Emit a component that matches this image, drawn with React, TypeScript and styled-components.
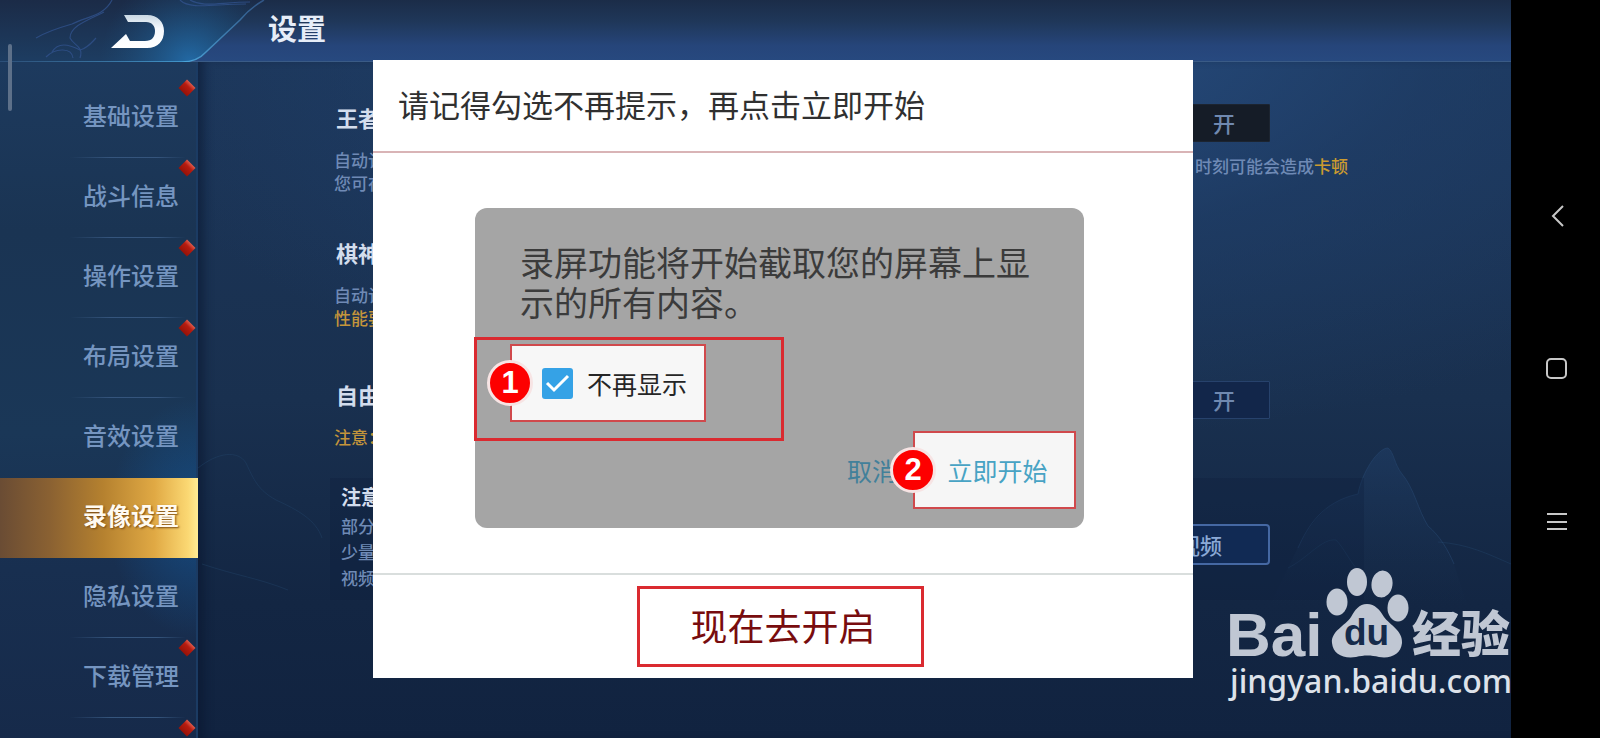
import React from "react";
import styled, { createGlobalStyle } from "styled-components";

const GlobalStyle = createGlobalStyle`
  * { box-sizing: border-box; }
  html, body, #root { min-height: 100%; }
  body {
    margin: 0;
    background: #000;
    font-family: "Noto Sans", "Noto Sans CJK SC", sans-serif;
    overflow: hidden;
  }
  button { font: inherit; cursor: pointer; }
  h1, h2, p { margin: 0; }
`;

const Screen = styled.div`
  display: grid;
  grid-template-columns: 1fr 89px;
  height: 100vh;
`;

const Game = styled.div`
  position: relative;
  display: flex;
  flex-direction: column;
  overflow: hidden;
  background: #122542;
`;

const Header = styled.header`
  display: flex;
  height: 62px;
  flex: none;
  border-bottom: 1px solid #3a5b86;
  background: linear-gradient(#1b2c48 0%, #1f3759 35%, #26457a 75%, #27497f 100%);
`;

const BackButton = styled.button`
  width: 268px;
  height: 63px;
  padding: 0;
  border: 0;
  background: none;
  svg { display: block; }
`;

const PageTitle = styled.h1`
  font-size: 29px;
  line-height: 57px;
  font-weight: 700;
  color: #e6edf8;
`;

const Columns = styled.div`
  display: flex;
  flex: 1;
  min-height: 0;
`;

const Sidebar = styled.nav`
  width: 198px;
  flex: none;
  padding-top: 16px;
  border-right: 2px solid #1b3b63;
  background:
    radial-gradient(ellipse 90px 120px at 198px 456px, rgba(20, 92, 160, 0.6), transparent),
    linear-gradient(#1d3a5e 0%, #1a3453 25%, #1a3757 55%, #182f50 75%, #162a4a 100%);
`;

const NavItem = styled.a<{ $active?: boolean; $line?: boolean }>`
  position: relative;
  display: flex;
  justify-content: flex-end;
  height: 80px;
  padding-right: 19px;
  margin-right: -2px;
  font-size: 24px;
  line-height: 76px;
  font-weight: ${(p) => (p.$active ? 700 : 500)};
  text-decoration: none;
  color: ${(p) => (p.$active ? "#fffaf0" : "#7595c0")};
  text-shadow: ${(p) => (p.$active ? "1px 1px 2px #7a4a10" : "none")};
  background: ${(p) =>
    p.$active
      ? "linear-gradient(90deg, #6a4c34 0%, #8a6132 25%, #b5812f 52%, #e0a944 78%, #fbd873 95%, #ffec94 100%)"
      : p.$line
        ? "linear-gradient(90deg, transparent, #35557d 35%, #35557d 75%, transparent) 70px 100% / 116px 1px no-repeat"
        : "none"};
`;

const RedDot = styled.i`
  position: absolute;
  top: 4px;
  right: 5px;
  width: 12px;
  height: 12px;
  background: linear-gradient(180deg, #e05a4a, #b71c10 35%, #961208);
  transform: rotate(45deg);
`;

const Main = styled.main`
  position: relative;
  flex: 1;
  padding: 42px 147px 0 132px;
  box-shadow: inset 10px 0 10px -4px rgba(8, 20, 44, 0.5);
  background:
    radial-gradient(ellipse 900px 400px at 60% -20px, #274d80 0%, rgba(32, 64, 108, 0.6) 50%, transparent 100%),
    linear-gradient(#1c3659 0%, #19304f 50%, #132643 80%, #112340 100%);
`;

const Mountains = styled.svg`
  position: absolute;
  right: 0;
  bottom: 120px;
  width: 100%;
  height: 200px;
`;

const Section = styled.section<{ $height: number; $panel?: boolean }>`
  position: relative;
  display: flex;
  justify-content: space-between;
  height: ${(p) => p.$height}px;
  padding: ${(p) => (p.$panel ? "5px 16px 0 11px" : "0 16px 0 4px")};
  background: ${(p) => (p.$panel ? "rgba(14, 30, 60, 0.3)" : "none")};
`;

const SettingTitle = styled.h2<{ $tight?: boolean }>`
  margin-bottom: ${(p) => (p.$tight ? 2 : 16)}px;
  padding-left: ${(p) => (p.$tight ? 0 : 2)}px;
  font-size: ${(p) => (p.$tight ? 20 : 22)}px;
  line-height: 29px;
  color: #d3dded;
`;

const Note = styled.p<{ $gold?: boolean; $tall?: boolean }>`
  font-size: 17px;
  line-height: ${(p) => (p.$tall ? 26 : 23)}px;
  font-weight: 500;
  color: ${(p) => (p.$gold ? "#c4953b" : "#6f8ab5")};
`;

const Gold = styled.span`
  color: #cc9b30;
`;

const Controls = styled.div<{ $down?: boolean }>`
  display: flex;
  flex-direction: column;
  align-items: flex-end;
  gap: 13px;
  padding-top: ${(p) => (p.$down ? 41 : 0)}px;
`;

const GameButton = styled.button<{ $kind: "dark" | "blue" | "line" }>`
  width: ${(p) => (p.$kind === "line" ? 140 : 92)}px;
  height: ${(p) => (p.$kind === "line" ? 41 : 38)}px;
  margin-right: 78px;
  padding: 0;
  font-size: 22px;
  line-height: 30px;
  font-weight: 500;
  color: ${(p) => (p.$kind === "line" ? "#8ba9d6" : "#7089b0")};
  border: ${(p) =>
    p.$kind === "line" ? "2px solid #4568a3" : p.$kind === "blue" ? "1px solid #27426c" : "1px solid #1c2430"};
  border-radius: ${(p) => (p.$kind === "line" ? 4 : 1)}px;
  background: ${(p) => (p.$kind === "line" ? "#112a54" : p.$kind === "blue" ? "#12264a" : "#151c27")};
`;

const ScrollThumb = styled.div`
  position: absolute;
  left: 8px;
  top: 44px;
  width: 4px;
  height: 67px;
  border-radius: 2px;
  background: #5d7089;
`;

const Overlay = styled.div`
  position: absolute;
  inset: 60px 0 0 0;
  display: flex;
  justify-content: center;
  align-items: flex-start;
  padding-left: 55px;
`;

const Modal = styled.div`
  width: 820px;
  background: #fff;
`;

const ModalTitle = styled.h2`
  padding: 0 25px;
  font-size: 31px;
  line-height: 91px;
  font-weight: 400;
  color: #303030;
  border-bottom: 2px solid #d9b4b6;
`;

const ModalBody = styled.div`
  display: flex;
  justify-content: center;
  padding: 55px 7px 45px 0;
`;

const Prompt = styled.div`
  width: 609px;
  padding: 35px 0 19px;
  border-radius: 12px;
  background: #a5a5a5;
`;

const PromptText = styled.p`
  padding: 0 45px;
  margin-bottom: 14px;
  font-size: 34px;
  line-height: 40px;
  color: #3b3b3b;
`;

const Outline = styled.div`
  width: 310px;
  margin-left: -1px;
  padding: 4px 0 16px 33px;
  border: 3px solid #da2a30;
`;

const CheckLabel = styled.label`
  position: relative;
  display: flex;
  align-items: center;
  gap: 14px;
  width: 196px;
  height: 78px;
  padding-left: 30px;
  border: 2px solid #d0494c;
  background: #f7f7f7;
  font-size: 25px;
  color: #262626;
`;

const Check = styled.input`
  appearance: none;
  width: 31px;
  height: 31px;
  margin: 0;
  border-radius: 3px;
  background: #35a2e6;
`;

const CheckMark = styled.svg`
  position: absolute;
  left: 30px;
  top: 22px;
  pointer-events: none;
`;

const Step = styled.b`
  position: absolute;
  left: -25px;
  top: 14px;
  width: 46px;
  height: 46px;
  border: 3px solid #f7e4e4;
  border-radius: 50%;
  background: #fd0000;
  color: #fff;
  font-family: "Liberation Sans", sans-serif;
  font-size: 31px;
  line-height: 40px;
  text-align: center;
`;

const Actions = styled.div`
  display: flex;
  justify-content: flex-end;
  gap: 16px;
  margin-top: -10px;
  padding-right: 8px;
`;

const CancelButton = styled.button`
  padding: 0;
  border: 0;
  background: none;
  font-size: 25px;
  color: #42809a;
`;

const StartButton = styled.button`
  position: relative;
  width: 163px;
  height: 78px;
  padding: 0 0 0 6px;
  border: 2px solid #d0494c;
  background: #f6f6f6;
  font-size: 25px;
  color: #48a3c4;
`;

const ModalFooter = styled.div`
  display: flex;
  justify-content: center;
  padding: 11px 5px 11px 0;
  border-top: 2px solid #d9dedd;
`;

const ConfirmButton = styled.button`
  width: 287px;
  height: 81px;
  padding: 0 0 0 5px;
  border: 3px solid #da2a30;
  background: #fff;
  font-size: 37px;
  line-height: 40px;
  color: #780c0e;
`;

const Watermark = styled.div`
  position: absolute;
  right: 0;
  bottom: 34px;
  svg { display: block; }
`;

const SystemBar = styled.div`
  display: flex;
  flex-direction: column;
  align-items: center;
  justify-content: center;
  gap: 109px;
  padding-left: 2px;
  background: #000;
`;

const SystemButton = styled.button`
  width: 44px;
  height: 44px;
  padding: 0;
  border: 0;
  background: none;
  svg { display: block; }
`;

const items = [
  { name: "基础设置", dot: true },
  { name: "战斗信息", dot: true },
  { name: "操作设置", dot: true },
  { name: "布局设置", dot: true },
  { name: "音效设置", dot: false },
  { name: "录像设置", dot: false, active: true },
  { name: "隐私设置", dot: false },
  { name: "下载管理", dot: true },
];

const BackArt = () => (
  <svg width="268" height="63" viewBox="0 0 268 63" fill="none">
    <defs>
      <linearGradient id="tab" x1="0" y1="0" x2="0" y2="1">
        <stop offset="0" stopColor="#1b2b47" />
        <stop offset="1" stopColor="#1d3d62" />
      </linearGradient>
      <radialGradient id="glow" gradientUnits="userSpaceOnUse" cx="190" cy="62" r="90">
        <stop offset="0" stopColor="#2478bb" stopOpacity="0.75" />
        <stop offset="1" stopColor="#1d5584" stopOpacity="0" />
      </radialGradient>
      <linearGradient id="edge" gradientUnits="userSpaceOnUse" x1="0" y1="0" x2="264" y2="0">
        <stop offset="0" stopColor="#31557f" />
        <stop offset="0.7" stopColor="#4ba5da" />
        <stop offset="1" stopColor="#305383" />
      </linearGradient>
      <linearGradient id="arrow" x1="0" y1="0" x2="0" y2="1">
        <stop offset="0" stopColor="#c9d8e4" />
        <stop offset="0.4" stopColor="#f4f8fd" />
        <stop offset="1" stopColor="#ffffff" />
      </linearGradient>
    </defs>
    <path d="M0 0H264Q250 8 240 20L206 52Q197 62 182 62H0Z" fill="url(#tab)" />
    <path d="M0 0H264Q250 8 240 20L206 52Q197 62 182 62H0Z" fill="url(#glow)" />
    <path d="M264 0Q250 8 240 20L206 52Q197 62 182 62H0" stroke="url(#edge)" strokeWidth="1.5" />
    <g stroke="#31528c" strokeWidth="1.2" opacity="0.8">
      <path d="M112 0C104 16 88 16 72 24C58 28 46 32 36 38" />
      <path d="M104 12C88 20 70 26 70 38C74 46 84 46 80 58" />
      <path d="M52 52C58 42 68 44 80 50C88 48 92 42 96 38" />
      <path d="M46 57C56 47 72 48 73 58" />
      <path d="M180 0C190 10 214 4 246 4" />
      <path d="M190 0C204 8 220 2 250 2" />
    </g>
    <path
      d="M124 15H147C158 15 164 22 164 31C164 41 158 48 147 48H111L126 34L130 41H145C152 41 155 37 155 31C155 26 152 22 146 22H128Z"
      fill="url(#arrow)"
    />
  </svg>
);

const BaiduMark = () => (
  <svg width="284" height="136" viewBox="0 0 284 136" fill="#c0c7d3" role="img" aria-label="Baidu 经验 jingyan.baidu.com">
    <text x="-1" y="88" fontFamily="Liberation Sans, sans-serif" fontWeight="700" fontSize="62">Bai</text>
    <ellipse cx="110" cy="34" rx="10.500" ry="13.500" />
    <ellipse cx="130" cy="14" rx="10" ry="14" />
    <ellipse cx="155" cy="16" rx="10.500" ry="13.500" transform="rotate(8 155 16)" />
    <ellipse cx="171" cy="40" rx="10.500" ry="13.500" />
    <path d="M140 36C148 36 153 42 157 49C163 57 176 63 175 75C174 86 164 91 152 89C144 87 137 87 129 89C116 91 106 86 105 75C104 63 118 58 124 49C128 42 132 36 140 36Z" />
    <text x="117" y="77" fill="#162b4b" fontFamily="Liberation Sans, sans-serif" fontWeight="700" fontSize="37">du</text>
    <text x="185" y="84" fontFamily="Noto Sans CJK SC, sans-serif" fontWeight="900" fontSize="49">经验</text>
    <text x="3" y="125" fill="#dde2ea" fontFamily="Noto Sans, sans-serif" fontWeight="500" fontSize="32">jingyan.baidu.com</text>
  </svg>
);

export default function App() {
  return (
    <>
      <GlobalStyle />
      <Screen>
        <Game>
          <Header>
            <BackButton aria-label="返回">
              <BackArt />
            </BackButton>
            <PageTitle>设置</PageTitle>
          </Header>
          <Columns>
            <Sidebar>
              {items.map((item, i) => (
                <NavItem key={item.name} href="#" $active={item.active} $line={i !== 4}>
                  {item.name}
                  {item.dot && <RedDot />}
                </NavItem>
              ))}
              <NavItem as="div">
                <RedDot />
              </NavItem>
            </Sidebar>
            <Main>
              <Mountains viewBox="0 0 1313 200" preserveAspectRatio="xMaxYMax slice" fill="none" stroke="#24456c" strokeOpacity="0.6">
                <defs>
                  <linearGradient id="peak" x1="0" y1="0" x2="0" y2="1">
                    <stop offset="0" stopColor="#21406a" stopOpacity="0.5" />
                    <stop offset="1" stopColor="#1b3556" stopOpacity="0" />
                  </linearGradient>
                </defs>
                <path d="M0 50C20 34 40 32 48 45C56 62 60 72 78 82C100 92 118 102 124 120" strokeOpacity="0.4" />
                <path d="M4 146C40 158 60 160 90 172" strokeOpacity="0.4" />
                <path
                  d="M1090 150C1110 108 1124 84 1160 76C1164 54 1180 30 1190 30C1196 34 1196 46 1204 56C1216 70 1220 92 1230 108C1242 118 1250 132 1256 146L1270 190H1070Z"
                  fill="url(#peak)"
                  stroke="none"
                />
                <path d="M1100 130C1110 108 1124 84 1160 76C1164 54 1180 30 1190 30C1196 34 1196 46 1204 56C1216 70 1220 92 1230 108C1242 118 1250 132 1256 146" />
                <path d="M1090 150C1110 140 1124 120 1138 122C1146 130 1152 144 1160 152M1240 124C1270 126 1290 136 1313 146" strokeOpacity="0.4" />
              </Mountains>
              <Section $height={135}>
                <div>
                  <SettingTitle>王者</SettingTitle>
                  <Note>自动记</Note>
                  <Note>您可在</Note>
                </div>
                <Controls>
                  <GameButton $kind="dark">开</GameButton>
                  <Note>
                    时刻可能会造成<Gold>卡顿</Gold>
                  </Note>
                </Controls>
              </Section>
              <Section $height={142}>
                <div>
                  <SettingTitle>棋神</SettingTitle>
                  <Note>自动记</Note>
                  <Note $gold>性能要</Note>
                </div>
              </Section>
              <Section $height={97}>
                <div>
                  <SettingTitle>自由</SettingTitle>
                  <Note $gold>注意：</Note>
                </div>
                <Controls>
                  <GameButton $kind="blue">开</GameButton>
                </Controls>
              </Section>
              <Section $height={122} $panel>
                <div>
                  <SettingTitle $tight>注意</SettingTitle>
                  <Note $tall>部分</Note>
                  <Note $tall>少量</Note>
                  <Note $tall>视频</Note>
                </div>
                <Controls $down>
                  <GameButton $kind="line">视频</GameButton>
                </Controls>
              </Section>
            </Main>
          </Columns>
          <ScrollThumb />
          <Overlay>
            <Modal role="dialog" aria-labelledby="modal-title">
              <ModalTitle id="modal-title">请记得勾选不再提示，再点击立即开始</ModalTitle>
              <ModalBody>
                <Prompt>
                  <PromptText>录屏功能将开始截取您的屏幕上显示的所有内容。</PromptText>
                  <Outline>
                    <CheckLabel>
                      <Check type="checkbox" defaultChecked />
                      <CheckMark width="31" height="31" viewBox="0 0 31 31" fill="none" stroke="#fff" strokeWidth="3">
                        <path d="M5 15L12 22L26 8" />
                      </CheckMark>
                      不再显示
                      <Step>1</Step>
                    </CheckLabel>
                  </Outline>
                  <Actions>
                    <CancelButton>取消</CancelButton>
                    <StartButton>
                      立即开始
                      <Step>2</Step>
                    </StartButton>
                  </Actions>
                </Prompt>
              </ModalBody>
              <ModalFooter>
                <ConfirmButton>现在去开启</ConfirmButton>
              </ModalFooter>
            </Modal>
          </Overlay>
          <Watermark>
            <BaiduMark />
          </Watermark>
        </Game>
        <SystemBar>
          <SystemButton aria-label="返回">
            <svg width="44" height="44" viewBox="0 0 44 44" fill="none" stroke="#c8c8c8" strokeWidth="2">
              <path d="M28 12L18 22L28 32" />
            </svg>
          </SystemButton>
          <SystemButton aria-label="主屏幕">
            <svg width="44" height="44" viewBox="0 0 44 44" fill="none" stroke="#c8c8c8" strokeWidth="2">
              <rect x="12" y="12" width="19" height="19" rx="4" />
            </svg>
          </SystemButton>
          <SystemButton aria-label="菜单">
            <svg width="44" height="44" viewBox="0 0 44 44" fill="none" stroke="#c8c8c8" strokeWidth="2">
              <path d="M12 14H32M12 22H32M12 29H32" />
            </svg>
          </SystemButton>
        </SystemBar>
      </Screen>
    </>
  );
}
